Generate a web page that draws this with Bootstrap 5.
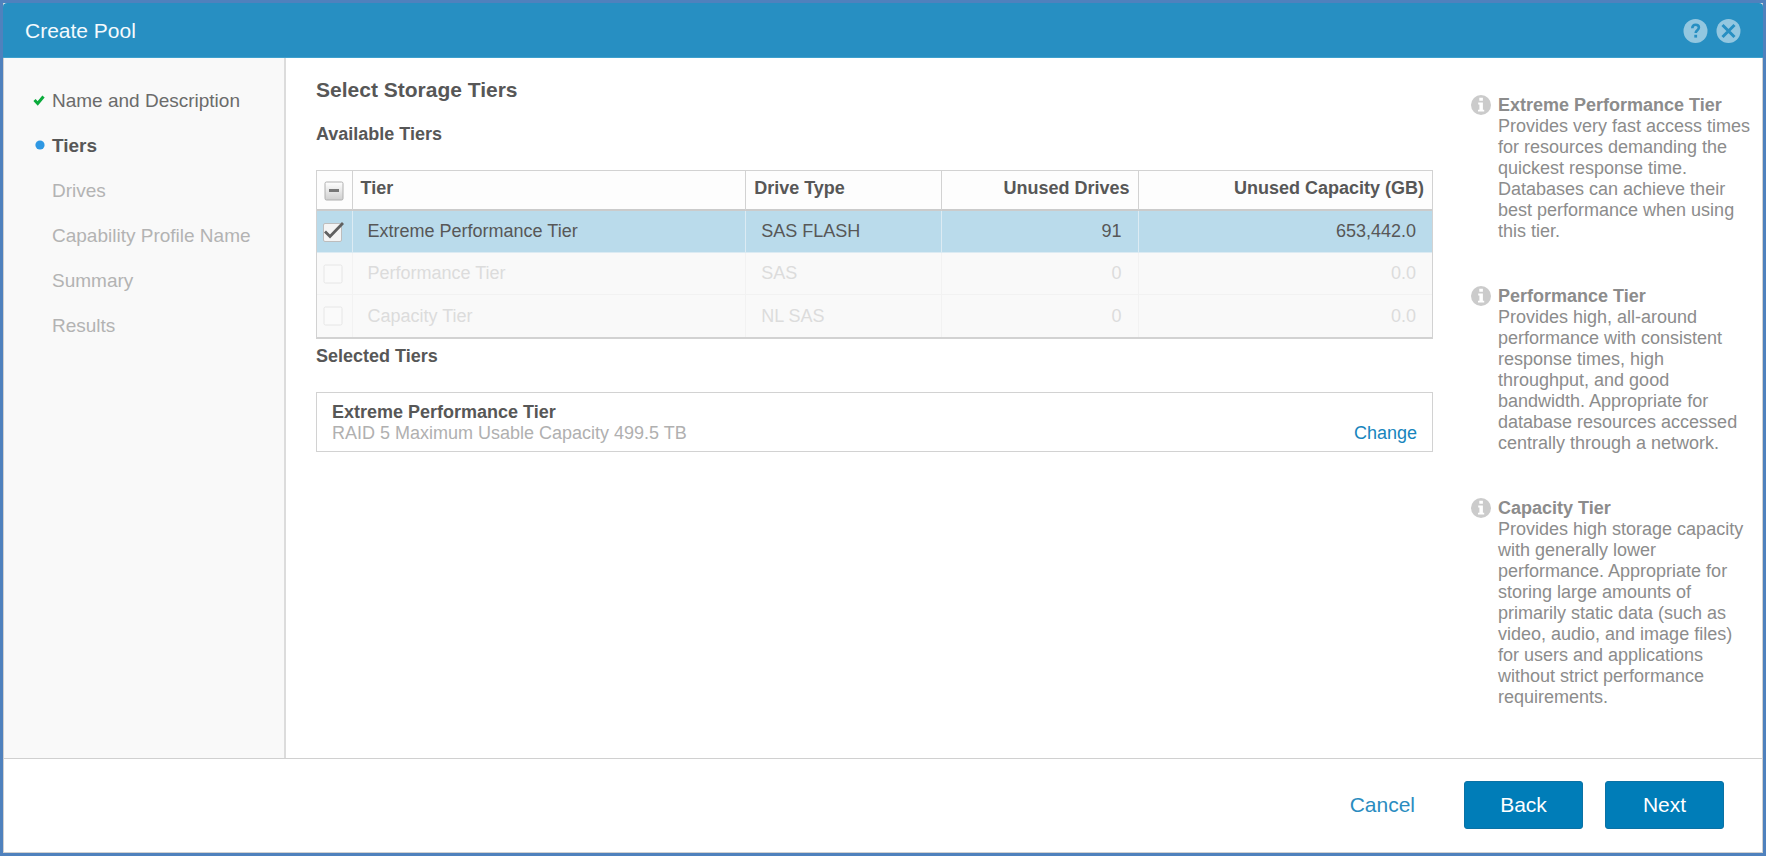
<!DOCTYPE html>
<html lang="en">
<head>
<meta charset="utf-8">
<meta name="viewport" content="width=device-width, initial-scale=1">
<title>Create Pool</title>
<link href="https://cdn.jsdelivr.net/npm/bootstrap@5.3.0/dist/css/bootstrap.min.css" rel="stylesheet">
<style>
  :root { --ink: #575757; --line: #d2d2d2; --brand: #007db8; }
  body { font-family: "Liberation Sans", Arial, sans-serif; font-size: 18px; line-height: 21px; color: var(--ink); }
  h1, h2, h3 { margin: 0; font-size: 18px; line-height: 21px; font-weight: 700; }
  a { color: #1785bd; text-decoration: none; }

  .wizard-page { padding: 0 1px 1px 0; }
  .wizard { border: 3px solid #4f81bd; background: #fff; }
  .wizard-inner { border: 1px solid #d0d0d0; border-top: 0; }
  .wizard-head { background: #278fc2; color: #f4fafd; height: 55px; margin: 0 -1px; padding: 1px 22px 0; border-radius: 4px 4px 0 0; border-bottom: 1px solid #3ea0cd; }
  .wizard-head h1 { font-size: 21px; line-height: 24px; font-weight: 400; padding-top: 1px; }
  .head-btn { border: 0; padding: 0; background: none; line-height: 0; }

  .steps { flex: 0 0 282px; background: #f9f9f9; border-right: 2px solid #dcdcdc; padding: 32px 12px 0 28px; }
  .steps ol { gap: 24px; font-size: 19px; }
  .steps a { color: #b3b3b3; }
  .steps a.done { color: #6b6b6b; }
  .steps a.current { color: var(--ink); font-weight: 700; }
  .step-mark { width: 20px; height: 21px; flex: none; }

  .content { padding: 20px 38px 20px 30px; }
  .content h2 { font-size: 21px; line-height: 24px; margin-bottom: 22px; }
  .content > h3 { margin-bottom: 25px; }
  .tier-grid { --bs-table-bg: transparent; margin-bottom: 7px; border: 1px solid var(--line); border-bottom-width: 2px; border-collapse: separate; border-spacing: 0; table-layout: fixed; color: var(--ink); }
  .tier-grid > * > tr > * { color: inherit; border: 0; border-left: 1px solid var(--line); vertical-align: middle; }
  .tier-grid > * > tr > :first-child { border-left: 0; padding: 0; text-align: center; }
  .tier-grid > thead > tr > * { height: 40px; padding: 0 8px 4px; background: #fdfdfd; border-bottom: 2px solid #cbcbcb; font-weight: 700; }
  .tier-grid > thead > tr > :first-child { padding-top: 2px; }
  .tier-grid > tbody > tr > * { height: 42px; padding: 0 16px 0 15px; border-left-color: #f2f2f2; border-bottom: 1px solid #f2f2f2; background: #f9f9f9; }
  .tier-grid > tbody > tr > :first-child { padding-right: 2px; }
  .tier-grid > tbody > tr.chosen > * { background: #badbeb; border-left-color: #dcebf3; border-bottom-color: #dcebf3; }
  .tier-grid > tbody > tr.off { color: #dcdcdc; }
  .tier-grid > tbody > tr:last-child > * { border-bottom: 0; }

  .tick { appearance: none; display: inline-block; width: 22px; height: 22px; margin: 0; vertical-align: middle; background: center / 22px 22px no-repeat url("data:image/svg+xml,%3Csvg xmlns='http://www.w3.org/2000/svg' viewBox='0 0 22 22'%3E%3Crect x='2' y='2' width='18' height='18' rx='1.5' fill='%23fafafa' stroke='%23e6e6e6'/%3E%3C/svg%3E"); }
  .tick:checked { background-image: url("data:image/svg+xml,%3Csvg xmlns='http://www.w3.org/2000/svg' viewBox='0 0 22 22'%3E%3Crect x='1.5' y='2.5' width='18' height='18' rx='1.5' fill='%23f4f4f4' stroke='%23bdbdbd'/%3E%3Cpath d='M3 10.500l5 5L21 2' fill='none' stroke='%23606060' stroke-width='2.800'/%3E%3C/svg%3E"); }
  .tick.mixed { background-image: url("data:image/svg+xml,%3Csvg xmlns='http://www.w3.org/2000/svg' viewBox='0 0 22 22'%3E%3Cdefs%3E%3ClinearGradient id='g' x2='0' y2='1'%3E%3Cstop stop-color='%23fff'/%3E%3Cstop offset='1' stop-color='%23cfcfcf'/%3E%3C/linearGradient%3E%3C/defs%3E%3Crect x='2' y='2' width='18' height='18' rx='1.5' fill='url(%23g)' stroke='%23b0b0b0'/%3E%3Cpath d='M6 10.500h10' stroke='%23777' stroke-width='3'/%3E%3C/svg%3E"); }

  .picked { border: 1px solid var(--line); padding: 9px 15px 7px; }
  .picked p { color: #b0b0b0; }

  .help { flex: 0 0 291px; padding: 37px 9px 20px 0; gap: 44px; color: #8c8c8c; }
  .help svg { flex: none; margin-right: 7px; }

  .wizard-foot { border-top: 1px solid #d0d0d0; padding: 22px 38px 23px; gap: 22px; }
  .wizard-foot .btn { font-size: 21px; line-height: 24px; border-radius: 3px; padding: 11px 0; width: 119px; }
  .wizard-foot .btn-step { background: var(--brand); border-color: #0a72a5; color: #fff; }
  .wizard-foot .btn-link { width: auto; padding: 11px 26px; color: #2a8cc0; text-decoration: none; }
</style>
</head>
<body>
<div class="wizard-page d-flex flex-column min-vh-100">
  <div class="wizard flex-grow-1 d-flex flex-column">
    <div class="wizard-inner flex-grow-1 d-flex flex-column">
      <header class="wizard-head d-flex align-items-center">
        <h1 class="me-auto">Create Pool</h1>
        <div class="d-flex gap-2 align-items-center">
          <button class="head-btn" type="button" aria-label="Help">
            <svg width="25" height="24" viewBox="0 0 25 24"><circle cx="12.500" cy="12" r="12" fill="#93c7e0"/><path d="M9.300 9.200c0-2.300 1.300-3.500 3.300-3.500s3.300 1.100 3.300 2.900c0 2.500-3.200 2.600-3.200 5.300" fill="none" stroke="#278fc2" stroke-width="2.600"/><rect x="11.300" y="15.800" width="2.800" height="2.800" fill="#278fc2"/></svg>
          </button>
          <button class="head-btn" type="button" aria-label="Close">
            <svg width="25" height="24" viewBox="0 0 25 24"><circle cx="12.500" cy="12" r="12" fill="#93c7e0"/><path d="M6.500 6l12 12m0-12l-12 12" fill="none" stroke="#278fc2" stroke-width="3"/></svg>
          </button>
        </div>
      </header>

      <div class="flex-grow-1 d-flex">
        <nav class="steps" aria-label="Steps">
          <ol class="list-unstyled d-flex flex-column mb-0">
            <li class="d-flex"><svg class="step-mark" viewBox="0 0 20 21"><path d="M2.500 10l3.200 3.500L11.500 6.500" fill="none" stroke="#0bab3c" stroke-width="3"/></svg><a href="#" class="done">Name and Description</a></li>
            <li class="d-flex"><svg class="step-mark" viewBox="0 0 20 21"><circle cx="8" cy="10" r="4.600" fill="#2f98e3"/></svg><a href="#" class="current" aria-current="step">Tiers</a></li>
            <li class="d-flex"><span class="step-mark"></span><a href="#">Drives</a></li>
            <li class="d-flex"><span class="step-mark"></span><a href="#">Capability Profile Name</a></li>
            <li class="d-flex"><span class="step-mark"></span><a href="#">Summary</a></li>
            <li class="d-flex"><span class="step-mark"></span><a href="#">Results</a></li>
          </ol>
        </nav>

        <main class="content flex-grow-1">
          <h2>Select Storage Tiers</h2>
          <h3>Available Tiers</h3>
          <table class="table tier-grid">
            <colgroup><col style="width:3.1%"><col style="width:35.3%"><col style="width:17.6%"><col style="width:17.6%"><col></colgroup>
            <thead>
              <tr><th><input type="checkbox" class="tick mixed" aria-label="Select all tiers"></th><th>Tier</th><th>Drive Type</th><th class="text-end">Unused Drives</th><th class="text-end">Unused Capacity (GB)</th></tr>
            </thead>
            <tbody>
              <tr class="chosen"><td><input type="checkbox" class="tick" checked aria-label="Extreme Performance Tier"></td><td>Extreme Performance Tier</td><td>SAS FLASH</td><td class="text-end">91</td><td class="text-end">653,442.0</td></tr>
              <tr class="off"><td><input type="checkbox" class="tick" disabled aria-label="Performance Tier"></td><td>Performance Tier</td><td>SAS</td><td class="text-end">0</td><td class="text-end">0.0</td></tr>
              <tr class="off"><td><input type="checkbox" class="tick" disabled aria-label="Capacity Tier"></td><td>Capacity Tier</td><td>NL SAS</td><td class="text-end">0</td><td class="text-end">0.0</td></tr>
            </tbody>
          </table>
          <h3>Selected Tiers</h3>
          <section class="picked d-flex justify-content-between align-items-end">
            <div>
              <h3>Extreme Performance Tier</h3>
              <p class="mb-0">RAID 5 Maximum Usable Capacity 499.5 TB</p>
            </div>
            <a href="#">Change</a>
          </section>
        </main>

        <aside class="help d-flex flex-column">
          <section class="d-flex">
            <svg width="20" height="20" viewBox="0 0 20 20"><circle cx="10" cy="10" r="10" fill="#cbcbcb"/><path d="M8.300 2.800h3.600v3H8.300zM7.200 7.600h4.700v7.200h1.300v1.800H7v-1.800h1.400V9.400H7.200z" fill="#fff"/></svg>
            <div><h3>Extreme Performance Tier</h3><p class="mb-0">Provides very fast access times for resources demanding the quickest response time. Databases can achieve their best performance when using this tier.</p></div>
          </section>
          <section class="d-flex">
            <svg width="20" height="20" viewBox="0 0 20 20"><circle cx="10" cy="10" r="10" fill="#cbcbcb"/><path d="M8.300 2.800h3.600v3H8.300zM7.200 7.600h4.700v7.200h1.300v1.800H7v-1.800h1.400V9.400H7.200z" fill="#fff"/></svg>
            <div><h3>Performance Tier</h3><p class="mb-0">Provides high, all-around performance with consistent response times, high throughput, and good bandwidth. Appropriate for database resources accessed centrally through a network.</p></div>
          </section>
          <section class="d-flex">
            <svg width="20" height="20" viewBox="0 0 20 20"><circle cx="10" cy="10" r="10" fill="#cbcbcb"/><path d="M8.300 2.800h3.600v3H8.300zM7.200 7.600h4.700v7.200h1.300v1.800H7v-1.800h1.400V9.400H7.200z" fill="#fff"/></svg>
            <div><h3>Capacity Tier</h3><p class="mb-0">Provides high storage capacity with generally lower performance. Appropriate for storing large amounts of primarily static data (such as video, audio, and image files) for users and applications without strict performance requirements.</p></div>
          </section>
        </aside>
      </div>

      <footer class="wizard-foot d-flex justify-content-end align-items-center">
        <button type="button" class="btn btn-link">Cancel</button>
        <button type="button" class="btn btn-step">Back</button>
        <button type="button" class="btn btn-step">Next</button>
      </footer>
    </div>
  </div>
</div>
<script src="https://cdn.jsdelivr.net/npm/bootstrap@5.3.0/dist/js/bootstrap.bundle.min.js"></script>
</body>
</html>
